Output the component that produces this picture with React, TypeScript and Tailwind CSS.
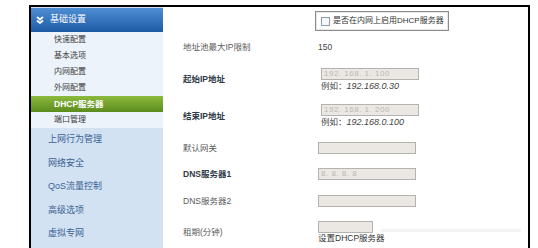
const subItems = ['快速配置', '基本选项', '内网配置', '外网配置', 'DHCP服务器', '端口管理']
const mainItems = ['上网行为管理', '网络安全', 'QoS流量控制', '高级选项', '虚拟专网']

function Field({ value, w = 'w-[98px]' }: { value?: string; w?: string }) {
  return (
    <div
      className={`${w} h-[12px] border border-[#b4b2ae] bg-[#ebe8e4] text-[8px] leading-[10px] text-[#b9b6b2] pl-[2px] tracking-[0.5px]`}
    >
      {value}
    </div>
  )
}

export default function App() {
  return (
    <div className="w-[538px] h-[248px] overflow-hidden bg-white pt-[5px] pl-[29px] font-['Liberation_Sans','Noto_Sans_CJK_SC',sans-serif]">
      <div className="w-[501px] h-[260px] border-2 border-black flex">
        {/* sidebar */}
        <div className="w-[132px] bg-[#d3e2f3] flex flex-col">
          <div className="h-[24px] mt-[1px] bg-gradient-to-b from-[#4f8fd4] to-[#1c5aa5] flex items-center pl-[5px] gap-[6px] text-white text-[9px]">
            <svg width="8" height="8" viewBox="0 0 8 8" fill="none" stroke="white" strokeWidth="1.8">
              <path d="M1 1 L4 3.5 L7 1" />
              <path d="M1 4.5 L4 7 L7 4.5" />
            </svg>
            <span>基础设置</span>
          </div>
          <div className="bg-[#edf3fa]">
            {subItems.map((s) =>
              s === 'DHCP服务器' ? (
                <div
                  key={s}
                  className="h-[16px] flex items-center pl-[23px] text-[8.5px] font-bold text-white bg-gradient-to-b from-[#8dba3e] to-[#5b8c1c]"
                >
                  {s}
                </div>
              ) : (
                <div key={s} className="h-[16px] flex items-center pl-[23px] text-[8px] text-[#3a3a3a]">
                  {s}
                </div>
              )
            )}
          </div>
          {mainItems.map((m) => (
            <div key={m} className="h-[23.5px] flex items-center pl-[17px] text-[9px] text-[#3a6294]">
              {m}
            </div>
          ))}
        </div>

        {/* content */}
        <div className="flex-1 bg-white flex flex-col text-[8.5px]">
          <div className="h-[20px] mt-[4px] ml-[152px] w-fit pr-[4px] border border-[#8c8c8c] flex items-center gap-[3px] pl-[5px] text-[#333] whitespace-nowrap text-[8px] shadow-[inset_0_0_0_1px_#e6e6e6]">
            <div className="w-[9px] h-[9px] shrink-0 border border-[#8a9bb0] bg-[#f4f7fb]" />
            <span>是否在内网上启用DHCP服务器</span>
          </div>

          <div className="h-[32px] flex items-center">
            <div className="w-[155px] pl-[20px] text-[#5a5a5a]">地址池最大IP限制</div>
            <div className="text-[#444]">150</div>
          </div>

          <div className="h-[33px] flex items-center">
            <div className="w-[155px] pl-[20px] font-bold text-[#2e3a48]">起始IP地址</div>
            <div className="flex flex-col pl-[3px]">
              <Field value="192. 168. 1. 100" />
              <div className="text-[#444] leading-[12px]">
                例如：<i className="text-[9px]">192.168.0.30</i>
              </div>
            </div>
          </div>

          <div className="h-[40px] flex items-center">
            <div className="w-[155px] pl-[20px] font-bold text-[#2e3a48]">结束IP地址</div>
            <div className="flex flex-col pl-[3px]">
              <Field value="192. 168. 1. 200" />
              <div className="text-[#444] leading-[12px]">
                例如：<i className="text-[9px]">192.168.0.100</i>
              </div>
            </div>
          </div>

          <div className="h-[24px] flex items-center">
            <div className="w-[155px] pl-[20px] text-[#5a5a5a]">默认网关</div>
            <Field />
          </div>

          <div className="h-[28px] flex items-center">
            <div className="w-[155px] pl-[20px] font-bold text-[#2e3a48]">DNS服务器1</div>
            <Field value="8. 8. 8. 8" />
          </div>

          <div className="h-[26px] flex items-center">
            <div className="w-[155px] pl-[20px] text-[#5a5a5a]">DNS服务器2</div>
            <Field />
          </div>

          <div className="h-[36px] flex items-center">
            <div className="w-[155px] pl-[20px] text-[#5a5a5a]">租期(分钟)</div>
            <div className="flex flex-col">
              <div className="flex items-center gap-[8px]">
                <Field w="w-[55px]" />
                <div className="w-[140px] h-[3px] mt-[8px] bg-[#f3f3f3]" />
              </div>
              <div className="text-[#333] leading-[11px]">设置DHCP服务器</div>
            </div>
          </div>
        </div>
      </div>
    </div>
  )
}
